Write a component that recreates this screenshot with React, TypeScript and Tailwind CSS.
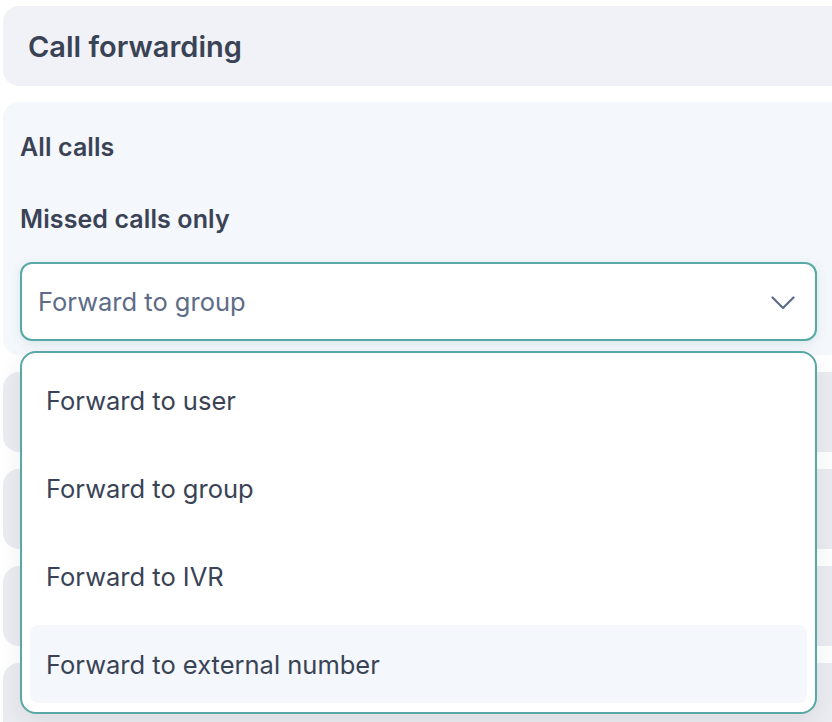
export default function App() {
  const options = ["Forward to user", "Forward to group", "Forward to IVR", "Forward to external number"];
  return (
    <div className="relative h-[722px] w-full overflow-hidden bg-white font-['Inter',sans-serif] text-[#374151]">
      <div className="pl-[3px] pt-[6px]">
        <div className="flex h-[80px] w-[860px] items-center rounded-2xl bg-[#f1f2f7] pl-[25px] pt-[2px]">
          <h1 className="text-[29px] font-semibold text-[#3a4356]">Call forwarding</h1>
        </div>

        <div className="mt-[16px] h-[253px] w-[860px] rounded-2xl bg-[#f4f7fb] px-[17px] pt-[29px]">
          <div className="text-[25px] font-semibold leading-[32px] tracking-[0.1px] text-[#3a4356]">All calls</div>
          <div className="mt-[40px] text-[25px] font-semibold leading-[32px] tracking-[0.1px] text-[#3a4356]">Missed calls only</div>
          <div className="mt-[27px] flex h-[79px] w-[797px] items-center justify-between rounded-xl border-2 border-[#58a8a5] bg-white pl-[16px] pr-[20px] pt-[2px] shadow-[0_2px_10px_rgba(88,168,165,0.18)]">
            <span className="text-[25.5px] text-[#5d6c87]">Forward to group</span>
            <svg width="24" height="14" viewBox="0 0 24 14" fill="none">
              <path d="M1.5 1.5 L12 12 L22.5 1.5" stroke="#5d6c87" strokeWidth="2.2" strokeLinecap="round" strokeLinejoin="round" />
            </svg>
          </div>
        </div>

        {[0, 1, 2, 3].map((i) => (
          <div key={i} className="mt-[17px] h-[80px] w-[860px] rounded-2xl bg-[#ebecf1]" />
        ))}
      </div>

      <div className="absolute left-[20px] top-[351px] flex w-[797px] flex-col gap-[10px] rounded-2xl border-2 border-[#58a8a5] bg-white px-[8px] pb-[9px] pt-[8px] shadow-[0_8px_24px_rgba(30,41,59,0.08)]">
        {options.map((o, i) => (
          <div
            key={o}
            className={`flex h-[78px] items-center rounded-lg pl-[16px] pt-[3px] text-[25.5px] text-[#3a4356] ${i === 3 ? "bg-[#f4f7fb]" : ""}`}
          >
            {o}
          </div>
        ))}
      </div>
    </div>
  );
}
